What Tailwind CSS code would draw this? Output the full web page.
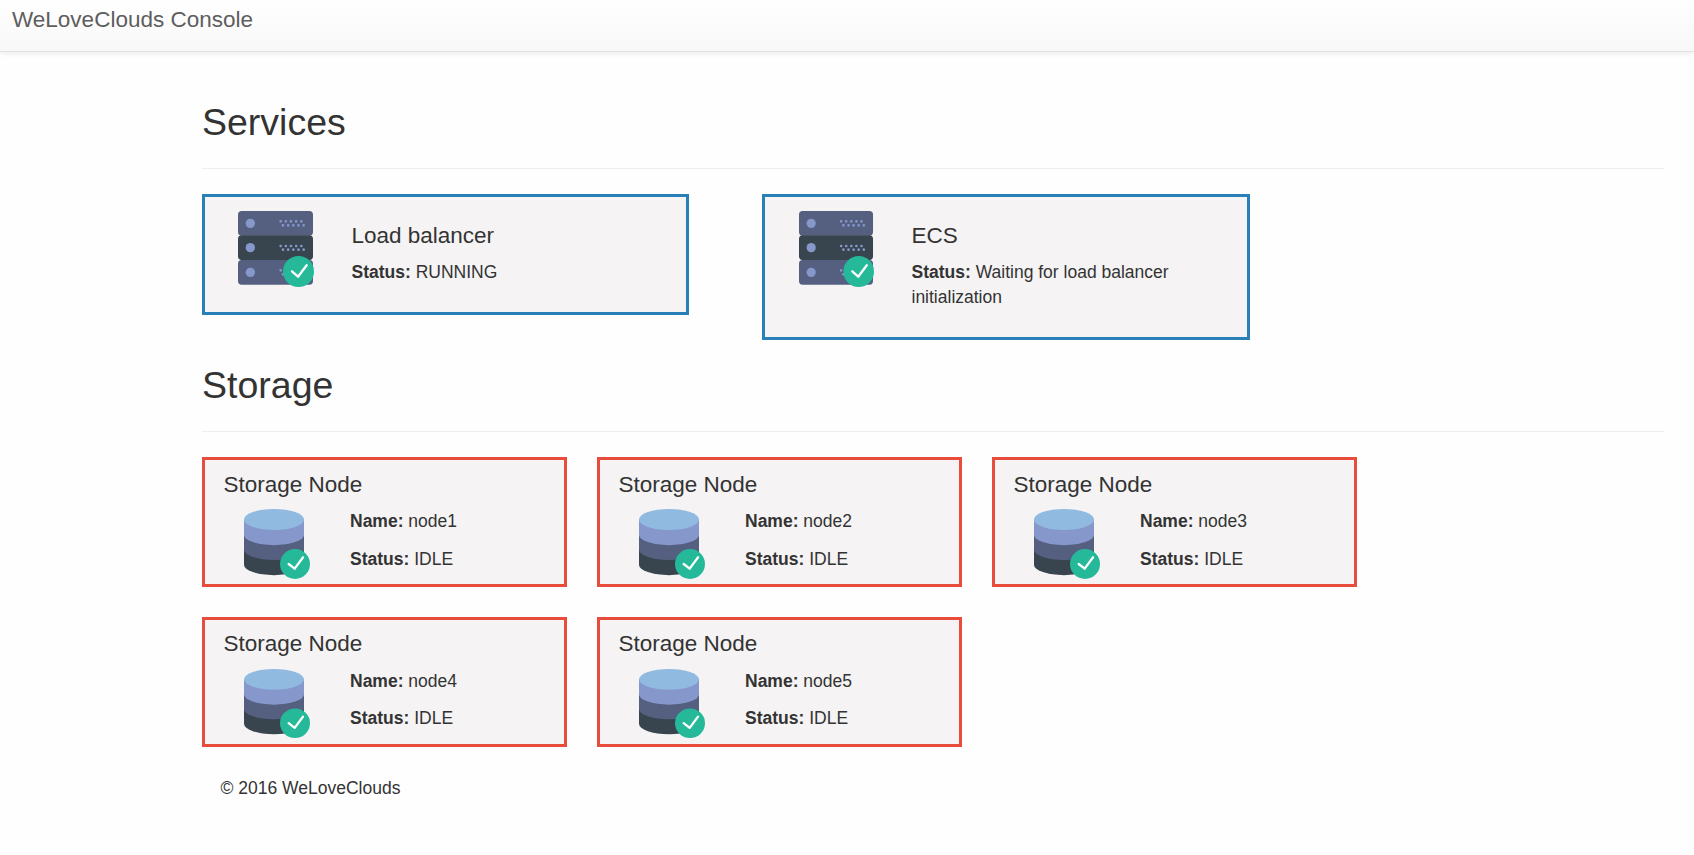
<!DOCTYPE html>
<html lang="en">
<head>
<meta charset="utf-8">
<title>WeLoveClouds Console</title>
<script src="https://cdn.jsdelivr.net/npm/@tailwindcss/browser@4"></script>
</head>
<body class="bg-[#fefefe] font-['Liberation_Sans',Arial,sans-serif] text-[17.5px] leading-[25px] text-[#333]">
<!-- Shared icons -->
<svg class="hidden">
  <symbol id="server" viewBox="39 33 228 228" preserveAspectRatio="none">
    <rect x="39" y="33" width="225" height="74" rx="11" fill="#556080"/>
    <rect x="39" y="180" width="225" height="74" rx="11" fill="#556080"/>
    <rect x="39" y="106" width="225" height="74" rx="11" fill="#38454f"/>
    <g fill="#8697cb">
      <circle cx="76" cy="70" r="14"/><circle cx="76" cy="143" r="14"/><circle cx="76" cy="217" r="14"/>
    </g>
    <g stroke="#8697cb" stroke-width="8" stroke-linecap="round" stroke-dasharray="0 15.5">
      <path d="M167 64H230M174 76H237M167 138H230M174 149H237M167 211H230M174 223H237"/>
    </g>
    <circle cx="220.500" cy="214.500" r="46.5" fill="#26b999"/>
    <path d="M201 214L219 230L245 196" fill="none" stroke="#fff" stroke-width="7" stroke-linecap="round" stroke-linejoin="round"/>
  </symbol>
  <symbol id="database" viewBox="42 42 198 210" preserveAspectRatio="none">
    <path d="M42 160V209A90 31.500 0 0 0 222 209V160Z" fill="#38454f"/>
    <path d="M42 115V163.500A90 31.500 0 0 0 222 163.500V115Z" fill="#556080"/>
    <path d="M42 73.500V119A90 31.500 0 0 0 222 119V73.500Z" fill="#8697cb"/>
    <ellipse cx="132" cy="73.500" rx="90" ry="31.500" fill="#91bae1"/>
    <circle cx="195" cy="207" r="45" fill="#26b999"/>
    <path d="M176 207L194 221L219 187" fill="none" stroke="#fff" stroke-width="7" stroke-linecap="round" stroke-linejoin="round"/>
  </symbol>
</svg>

<nav class="h-[52px] border-b border-[#e2e2e2] bg-linear-to-b from-white to-[#f8f8f8] pt-[7px] pl-3 shadow-[0_1px_6px_rgba(0,0,0,0.09)]">
  <a class="block text-[22.5px] leading-[25px] text-[#5e5e5e]">WeLoveClouds Console</a>
</nav>

<main class="ml-[202px] mr-[30px] pt-[49px]">
  <h1 class="h-[67px] text-[37.5px] leading-[42px]">Services</h1>
  <hr class="border-[#eee]">
  <section class="mt-[25px] flex h-[146px] items-start gap-[73px]">
    <article class="flex h-[121px] w-[487px] border-3 border-[#2980b9] bg-[#f5f3f4] pt-3.5 pl-[33px]">
      <svg class="size-[76px] shrink-0"><use href="#server"/></svg>
      <div class="ml-[37.5px] w-[290px] pt-[12px]">
        <h2 class="text-[22.5px] leading-[25px]">Load balancer</h2>
        <p class="mt-3"><b>Status:</b> RUNNING</p>
      </div>
    </article>
    <article class="flex h-[146px] w-[488px] border-3 border-[#2980b9] bg-[#f5f3f4] pt-3.5 pl-[34px]">
      <svg class="h-[76px] w-[75px] shrink-0"><use href="#server"/></svg>
      <div class="ml-[37.5px] w-[290px] pt-[12px]">
        <h2 class="text-[22.5px] leading-[25px]">ECS</h2>
        <p class="mt-3"><b>Status:</b> Waiting for load balancer initialization</p>
      </div>
    </article>
  </section>

  <h1 class="mt-6 h-[67px] text-[37.5px] leading-[42px]">Storage</h1>
  <hr class="border-[#eee]">
  <section class="mt-[25px] grid grid-cols-[365px_365px_365px] gap-[30px]">
    <article class="h-[130px] border-3 border-[#e74c3c] bg-[#f5f3f4] pt-3 pl-[18.5px]">
      <h2 class="text-[22.5px] leading-[25px]">Storage Node</h2>
      <div class="mt-3 flex pl-[20.5px]">
        <svg class="h-[70px] w-[66px]"><use href="#database"/></svg>
        <div class="ml-[40px] space-y-[13px]"><p><b>Name:</b> node1</p><p><b>Status:</b> IDLE</p></div>
      </div>
    </article>
    <article class="h-[130px] border-3 border-[#e74c3c] bg-[#f5f3f4] pt-3 pl-[18.5px]">
      <h2 class="text-[22.5px] leading-[25px]">Storage Node</h2>
      <div class="mt-3 flex pl-[20.5px]">
        <svg class="h-[70px] w-[66px]"><use href="#database"/></svg>
        <div class="ml-[40px] space-y-[13px]"><p><b>Name:</b> node2</p><p><b>Status:</b> IDLE</p></div>
      </div>
    </article>
    <article class="h-[130px] border-3 border-[#e74c3c] bg-[#f5f3f4] pt-3 pl-[18.5px]">
      <h2 class="text-[22.5px] leading-[25px]">Storage Node</h2>
      <div class="mt-3 flex pl-[20.5px]">
        <svg class="h-[70px] w-[66px]"><use href="#database"/></svg>
        <div class="ml-[40px] space-y-[13px]"><p><b>Name:</b> node3</p><p><b>Status:</b> IDLE</p></div>
      </div>
    </article>
    <article class="h-[130px] border-3 border-[#e74c3c] bg-[#f5f3f4] pt-[11px] pl-[18.5px]">
      <h2 class="text-[22.5px] leading-[25px]">Storage Node</h2>
      <div class="mt-[13px] flex pl-[20.5px]">
        <svg class="h-[69px] w-[66px]"><use href="#database"/></svg>
        <div class="ml-[40px] space-y-3"><p><b>Name:</b> node4</p><p><b>Status:</b> IDLE</p></div>
      </div>
    </article>
    <article class="h-[130px] border-3 border-[#e74c3c] bg-[#f5f3f4] pt-[11px] pl-[18.5px]">
      <h2 class="text-[22.5px] leading-[25px]">Storage Node</h2>
      <div class="mt-[13px] flex pl-[20.5px]">
        <svg class="h-[69px] w-[66px]"><use href="#database"/></svg>
        <div class="ml-[40px] space-y-3"><p><b>Name:</b> node5</p><p><b>Status:</b> IDLE</p></div>
      </div>
    </article>
  </section>
  <footer class="mt-[29px] pl-[18.5px]">© 2016 WeLoveClouds</footer>
</main>
</body>
</html>
